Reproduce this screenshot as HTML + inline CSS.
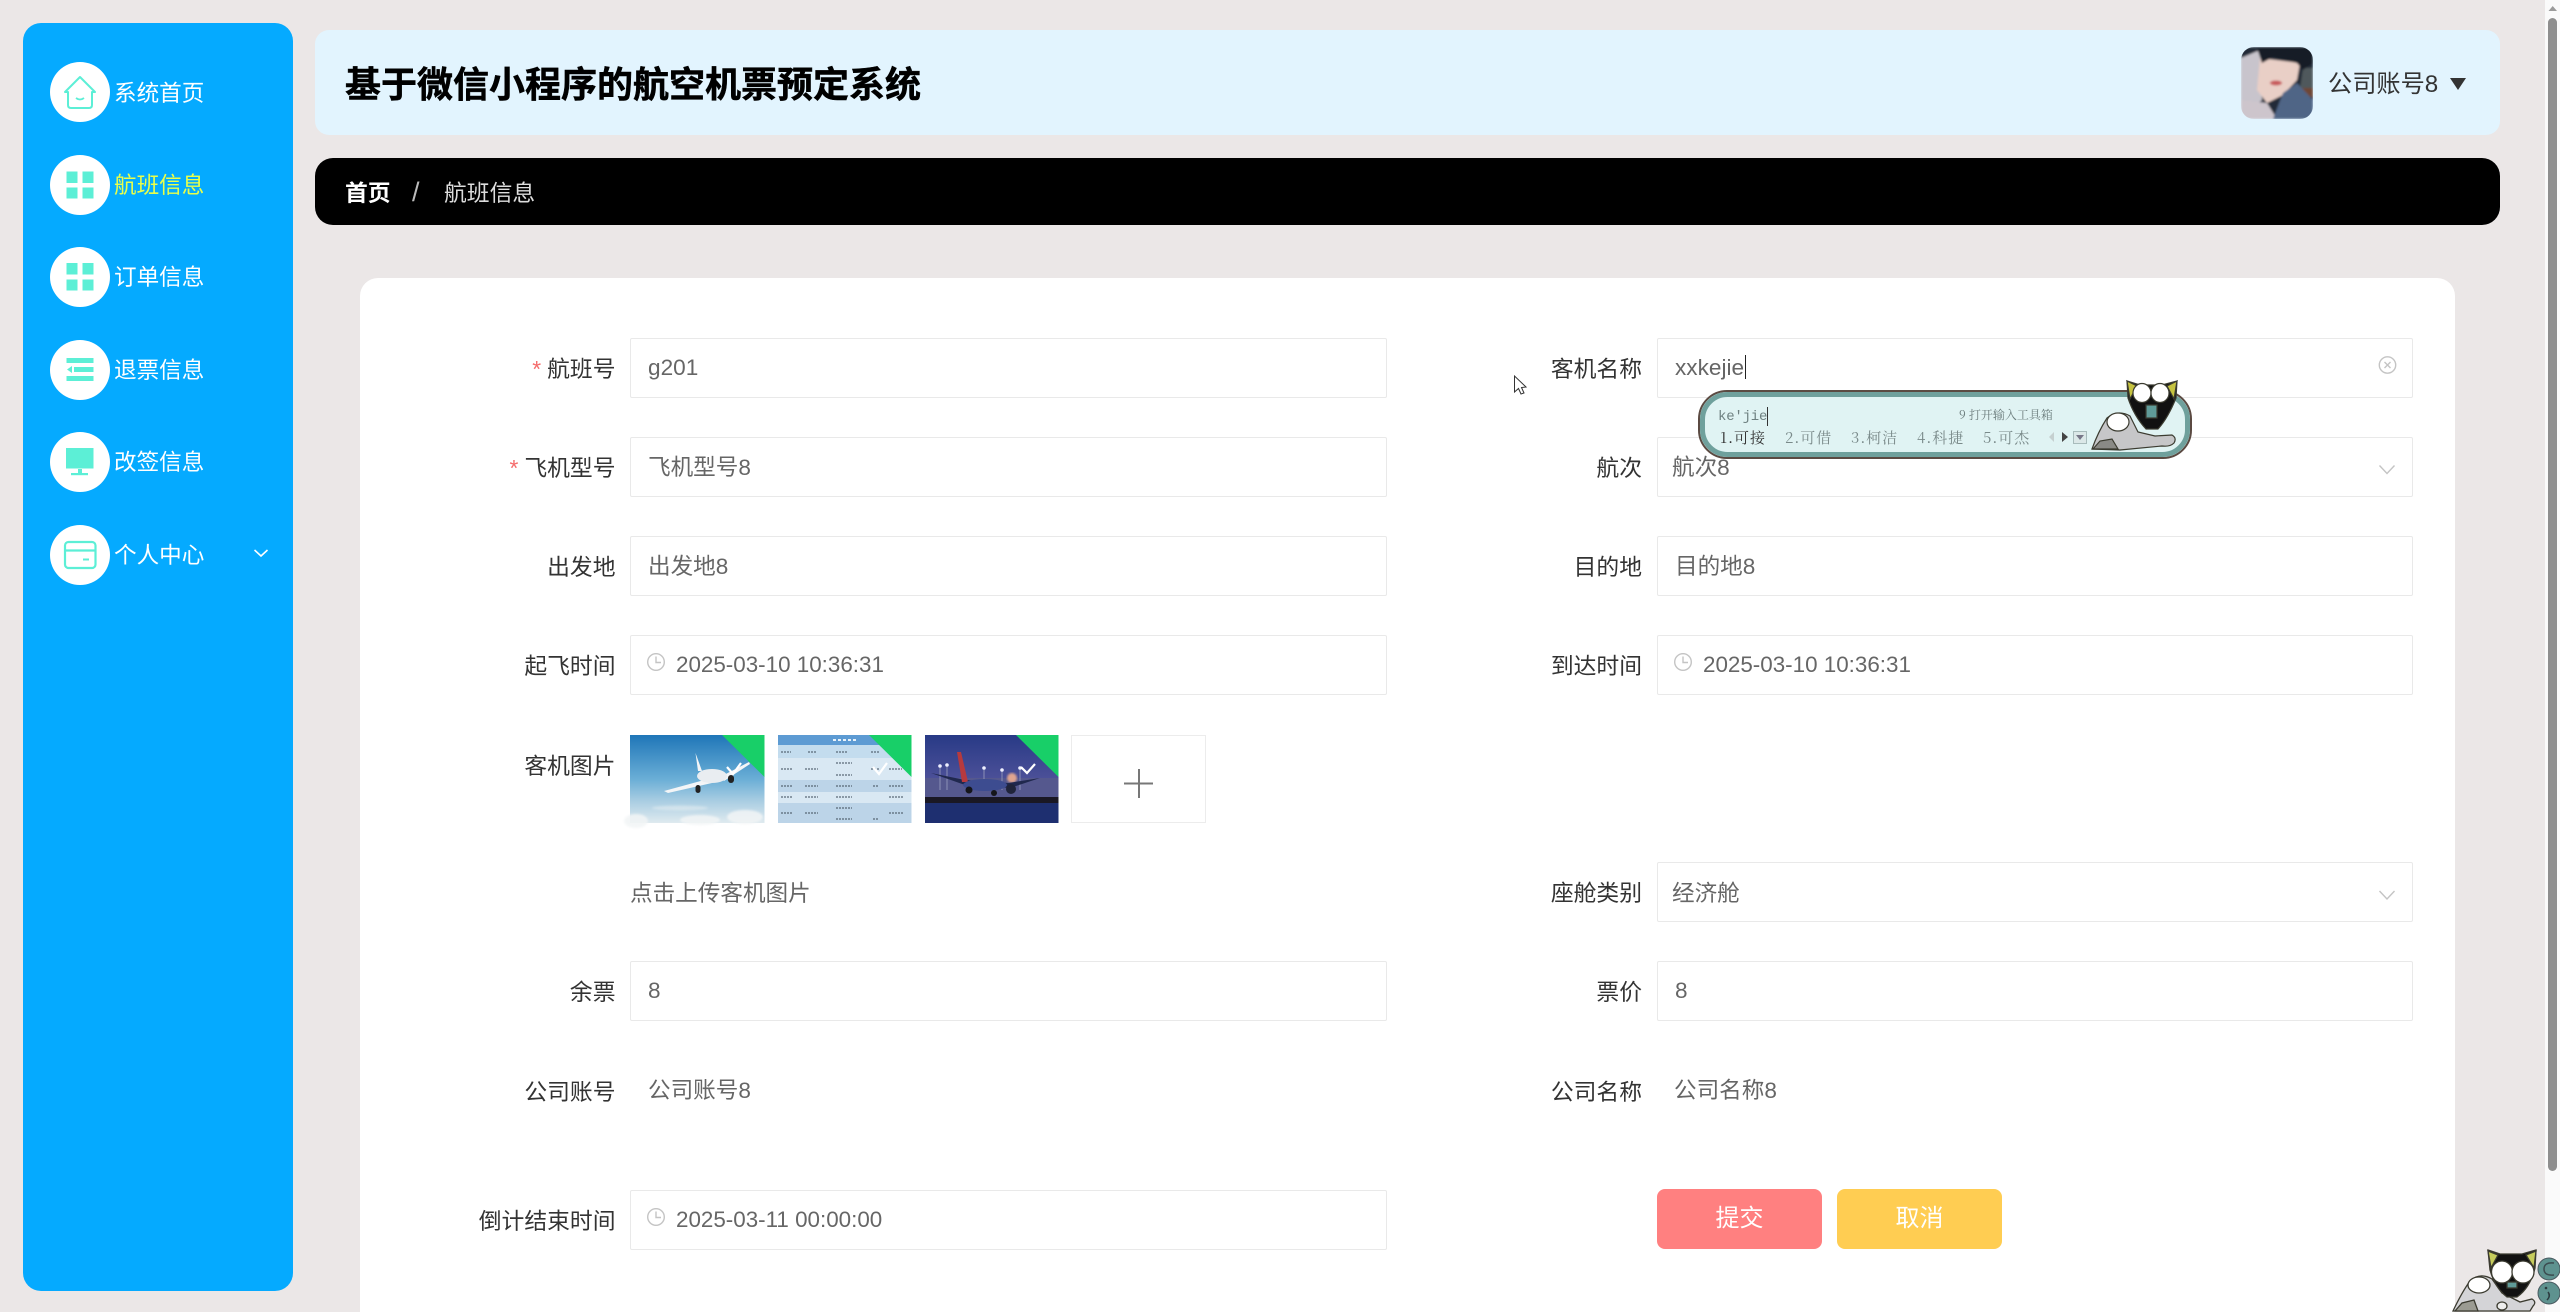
<!DOCTYPE html>
<html lang="zh"><head><meta charset="utf-8"><title>航班信息</title>
<style>
html,body{margin:0;padding:0;width:2560px;height:1312px;overflow:hidden;background:#ebe7e7}
body{font-family:"Liberation Sans","Noto Sans CJK SC",sans-serif;position:relative;color:#666}
.a{position:absolute;white-space:nowrap}
.nav{left:114px;width:100px;height:40px;line-height:40px;font-size:22.6px;color:#fff}
.lab{height:40px;line-height:40px;font-size:22.8px;color:#333;text-align:right;width:300px}
.lab.l{left:315.500px}.lab.r{left:1342px}
.lab i{font-style:normal;color:#f56c6c;margin-right:6px}
.in{height:58px;border:1px solid #e9e9e9;border-radius:2px;background:#fff;box-sizing:content-box}
.in.l{left:630px;width:755px}.in.r{left:1657px;width:754px}
.v{height:40px;line-height:40px;font-size:22.6px;color:#666}
.btn{top:1189px;height:60px;width:165px;line-height:60px;text-align:center;color:#fff;font-size:24px;border-radius:8px}
.ime{font-family:"Noto Serif CJK SC","Liberation Mono",serif;font-size:15px;line-height:20px;color:#7a8a8a;letter-spacing:1px}
</style></head><body>

<div class="a" style="left:23px;top:23px;width:270px;height:1268px;background:#05aaff;border-radius:18px"></div>
<div class="a" style="left:315px;top:30px;width:2185px;height:105px;background:#e2f4fe;border-radius:14px"></div>
<div class="a" style="left:315px;top:158px;width:2185px;height:67px;background:#000;border-radius:18px"></div>
<div class="a" style="left:360px;top:278px;width:2095px;height:1034px;background:#fff;border-radius:18px 18px 0 0"></div>

<div class="a" style="left:2545px;top:0;width:15px;height:1312px;background:#fafafa"></div>
<div class="a" style="left:2548px;top:18px;width:9px;height:1153px;background:#8e8e8e;border-radius:5px"></div>

<div class="a" style="left:345px;top:61px;height:48px;line-height:48px;font-size:36px;font-weight:700;color:#000;-webkit-text-stroke:.5px #000">基于微信小程序的航空机票预定系统</div>
<div class="a" style="left:2328px;top:65px;height:40px;line-height:40px;font-size:24.200px;color:#333">公司账号8</div>
<div class="a" style="left:345px;top:173px;height:40px;line-height:40px;font-size:22.800px;font-weight:700;color:#fff">首页</div>
<div class="a" style="left:412px;top:172px;height:40px;line-height:40px;font-size:27px;color:#bbb">/</div>
<div class="a" style="left:444px;top:173px;height:40px;line-height:40px;font-size:22.800px;color:#ddd">航班信息</div>

<div class="a nav" style="top:74px">系统首页</div>
<div class="a nav" style="top:166px;color:#e9ff4a">航班信息</div>
<div class="a nav" style="top:258px">订单信息</div>
<div class="a nav" style="top:351px">退票信息</div>
<div class="a nav" style="top:443px">改签信息</div>
<div class="a nav" style="top:536px">个人中心</div>

<!-- inputs -->
<div class="a in l" style="top:338px"></div><div class="a in r" style="top:338px"></div>
<div class="a in l" style="top:437px"></div><div class="a in r" style="top:437px"></div>
<div class="a in l" style="top:536px"></div><div class="a in r" style="top:536px"></div>
<div class="a in l" style="top:635px"></div><div class="a in r" style="top:635px"></div>
<div class="a in r" style="top:862px"></div>
<div class="a in l" style="top:961px"></div><div class="a in r" style="top:961px"></div>
<div class="a in l" style="top:1190px"></div>

<!-- labels -->
<div class="a lab l" style="top:349px"><i>*</i>航班号</div>
<div class="a lab l" style="top:448px"><i>*</i>飞机型号</div>
<div class="a lab l" style="top:547px">出发地</div>
<div class="a lab l" style="top:646px">起飞时间</div>
<div class="a lab l" style="top:746px">客机图片</div>
<div class="a lab l" style="top:972px">余票</div>
<div class="a lab l" style="top:1072px">公司账号</div>
<div class="a lab l" style="top:1201px">倒计结束时间</div>
<div class="a lab r" style="top:349px">客机名称</div>
<div class="a lab r" style="top:448px">航次</div>
<div class="a lab r" style="top:547px">目的地</div>
<div class="a lab r" style="top:646px">到达时间</div>
<div class="a lab r" style="top:873px">座舱类别</div>
<div class="a lab r" style="top:972px">票价</div>
<div class="a lab r" style="top:1072px">公司名称</div>

<!-- values -->
<div class="a v" style="left:648px;top:348px">g201</div>
<div class="a v" style="left:648px;top:448px">飞机型号8</div>
<div class="a v" style="left:648px;top:547px">出发地8</div>
<div class="a v" style="left:676px;top:645px;font-size:22.400px">2025-03-10 10:36:31</div>
<div class="a v" style="left:630px;top:874px">点击上传客机图片</div>
<div class="a v" style="left:648px;top:971px">8</div>
<div class="a v" style="left:648px;top:1071px">公司账号8</div>
<div class="a v" style="left:676px;top:1200px;font-size:22.400px">2025-03-11 00:00:00</div>
<div class="a v" style="left:1675px;top:348px">xxkejie</div>
<div class="a" style="left:1745px;top:355px;width:1px;height:24px;background:#222"></div>
<div class="a v" style="left:1672px;top:448px">航次8</div>
<div class="a v" style="left:1675px;top:547px">目的地8</div>
<div class="a v" style="left:1703px;top:645px;font-size:22.400px">2025-03-10 10:36:31</div>
<div class="a v" style="left:1672px;top:874px">经济舱</div>
<div class="a v" style="left:1675px;top:971px">8</div>
<div class="a v" style="left:1674px;top:1071px">公司名称8</div>

<div class="a btn" style="left:1657px;background:#ff8080">提交</div>
<div class="a btn" style="left:1837px;background:#ffcd52">取消</div>

<!-- graphics layer -->
<svg class="a" style="left:0;top:0" width="2560" height="1312" viewBox="0 0 2560 1312" xmlns="http://www.w3.org/2000/svg">
<defs>
<linearGradient id="s1" x1="0" y1="0" x2="0" y2="1"><stop offset="0" stop-color="#1f76b8"/><stop offset=".5" stop-color="#6aaed6"/><stop offset=".75" stop-color="#a9cde2"/><stop offset="1" stop-color="#dfeaef"/></linearGradient>
<linearGradient id="s3" x1="0" y1="0" x2="0" y2="1"><stop offset="0" stop-color="#283a86"/><stop offset="1" stop-color="#4c5098"/></linearGradient>
<clipPath id="av"><rect x="2241" y="47" width="72" height="72" rx="13"/></clipPath>
<filter id="bl"><feGaussianBlur stdDeviation="1"/></filter>
</defs>

<path d="M2548.500 11 L2552.700 6 L2557 11Z" fill="#9a9a9a"/>

<g fill="#fff">
<circle cx="80" cy="92" r="30"/><circle cx="80" cy="185" r="30"/><circle cx="80" cy="277" r="30"/>
<circle cx="80" cy="370" r="30"/><circle cx="80" cy="462" r="30"/><circle cx="80" cy="555" r="30"/>
</g>
<g fill="none" stroke="#5cefd6" stroke-width="2">
<path d="M65 92 L80 77 L95 92 L92 92 V105 Q92 108 89 108 H71 Q68 108 68 105 V92Z" stroke-linejoin="round"/>
<path d="M76 98 Q80 101 84 98" stroke-width="1.800"/>
</g>
<g fill="#5cefd6">
<rect x="66.500" y="171.500" width="11" height="11.500"/><rect x="82.500" y="171.500" width="11" height="11.500"/><rect x="66.500" y="187.500" width="11" height="11"/><rect x="82.500" y="187.500" width="11" height="11"/>
<rect x="66.500" y="263" width="11" height="11.500"/><rect x="82.500" y="263" width="11" height="11.500"/><rect x="66.500" y="279.500" width="11" height="11"/><rect x="82.500" y="279.500" width="11" height="11"/>
<rect x="66.500" y="358" width="27" height="5"/><rect x="74" y="367" width="19.500" height="5"/><path d="M67 369.500 L72 366 V373Z"/><rect x="66.500" y="376" width="27" height="5"/>
<rect x="66" y="448" width="27.500" height="20.500"/><rect x="78" y="469" width="4" height="4"/><rect x="71" y="473" width="17" height="2.200"/>
</g>
<g fill="none" stroke="#5cefd6" stroke-width="2.200">
<rect x="65" y="542" width="30.500" height="26" rx="3.500"/><path d="M65 550.500 H95.500"/>
<path d="M83 559.500 H89" stroke-width="2"/>
</g>
<path d="M254.500 550 L261 556 L267.500 550" fill="none" stroke="#fff" stroke-width="1.600"/>

<path d="M2450 78 H2466 L2458 90Z" fill="#333"/>

<!-- avatar -->
<g clip-path="url(#av)"><g filter="url(#bl)">
<rect x="2241" y="47" width="72" height="72" fill="#222c38"/>
<path d="M2303 68 H2313 V88 H2300Z" fill="#50585c"/>
<rect x="2299" y="88" width="14" height="9" fill="#6e4636"/>
<path d="M2241 58 L2260 50 L2262 100 L2241 119Z" fill="#c8c4cc"/>
<path d="M2260 58 L2300 63 L2297 80 L2283 95 L2267 103 L2257 90Z" fill="#e9cfc6"/>
<path d="M2257 48 L2313 47 V63 L2303 70 L2297 63 L2273 57 L2262 63Z" fill="#141c26"/>
<path d="M2241 100 L2267 103 L2277 119 H2241Z" fill="#cdc5cc"/>
<path d="M2273 119 L2283 93 L2297 83 L2313 100 V119Z" fill="#4f6586"/>
<ellipse cx="2276" cy="83" rx="6" ry="2.500" fill="#c85a5c"/>
</g></g>

<g fill="none" stroke="#c4c4c4" stroke-width="1.400">
<circle cx="2387.500" cy="365" r="8.200"/><path d="M2384.500 362 L2390.500 368 M2390.500 362 L2384.500 368"/>
<path d="M2379.500 465.500 L2387 473.500 L2394.500 465.500"/>
<path d="M2379.500 891 L2387 899 L2394.500 891"/>
<circle cx="656" cy="662" r="8.300"/><path d="M656 656.500 V662.500 H661"/>
<circle cx="1683" cy="662" r="8.300"/><path d="M1683 656.500 V662.500 H1688"/>
<circle cx="656" cy="1217" r="8.300"/><path d="M656 1211.500 V1217.500 H661"/>
</g>

<!-- thumb 1 -->
<rect x="630" y="735" width="134.500" height="88" fill="url(#s1)"/>
<g filter="url(#bl)" fill="#f2f5f6" opacity=".85"><ellipse cx="636" cy="821" rx="12" ry="7"/><ellipse cx="700" cy="820" rx="20" ry="5"/><ellipse cx="745" cy="817" rx="18" ry="7"/><ellipse cx="680" cy="808" rx="28" ry="2.500" opacity=".5"/></g>
<path d="M664 791 L708 779 L712 783 L668 793Z" fill="#f3f5f7"/>
<path d="M720 777 L749 762 L750 764 L724 781Z" fill="#f3f5f7"/>
<path d="M695.500 753 L698 771 L702 771Z" fill="#f3f5f7"/>
<ellipse cx="712" cy="776" rx="15" ry="7" fill="#e9edf1"/>
<rect x="695.500" y="785" width="5" height="8" rx="2.500" fill="#222"/><rect x="728" y="775" width="6" height="8" rx="3" fill="#222"/>
<path d="M722 735 H764.500 V777Z" fill="#18cf68"/>
<path d="M727 767 L733 774 L741 763" fill="none" stroke="#fff" stroke-width="2.200"/>

<!-- thumb 2 -->
<rect x="778" y="735" width="133.500" height="88" fill="#d9e8f3"/>
<rect x="778" y="735" width="133.500" height="10" fill="#5d9bd3"/>
<rect x="778" y="745" width="133.500" height="13" fill="#c3dcee"/>
<rect x="778" y="780" width="133.500" height="12" fill="#bcd4e8"/>
<rect x="778" y="803" width="133.500" height="20" fill="#bcd4e8"/>
<path d="M833 740 H858" stroke="#e8f2fa" stroke-width="2" stroke-dasharray="3 2"/>
<g stroke="#4d5c6a" stroke-width="1.500" stroke-dasharray="2 1" opacity=".75">
<path d="M781 752 H791 M808 752 H816 M836 752 H848 M871 752 H880 M781 769 H792 M805 769 H818 M836 763 H852 M836 775 H852 M871 769 H880 M889 769 H902 M781 786 H792 M805 786 H818 M836 786 H852 M873 786 H879 M889 786 H904 M781 797 H792 M805 797 H818 M836 797 H852 M889 797 H904 M781 813 H792 M805 813 H818 M836 808 H852 M836 819 H852 M873 819 H879 M889 813 H904"/>
</g>
<path d="M869 735 H911.500 V777Z" fill="#18cf68"/>
<path d="M873 767 L879 774 L887 763" fill="none" stroke="#fff" stroke-width="2.200"/>

<!-- thumb 3 -->
<rect x="925" y="735" width="133.500" height="44" fill="url(#s3)"/>
<rect x="925" y="778" width="133.500" height="19" fill="#55588e"/>
<rect x="925" y="797" width="133.500" height="6" fill="#1a1824"/>
<rect x="925" y="803" width="133.500" height="20" fill="#1e2f70"/>
<g stroke="#8a8fb5" stroke-width="1"><path d="M940 766 V790 M947 765 V790 M984 768 V790 M1002 770 V790 M1020 768 V790"/></g>
<g fill="#eef0ff"><circle cx="940" cy="766" r="1.800"/><circle cx="947" cy="765" r="1.800"/><circle cx="984" cy="768" r="1.800"/><circle cx="1002" cy="770" r="1.800"/><circle cx="1020" cy="768" r="1.800"/></g>
<circle cx="1012" cy="778" r="5" fill="#e0a58f" filter="url(#bl)"/>
<path d="M931 773 L965 780 L1008 783 L1040 778 L1010 788 L965 785Z" fill="#20284e"/>
<path d="M957 752 L962 782 L968 782 L961 752Z" fill="#b63a3e"/>
<ellipse cx="985" cy="785" rx="22" ry="6" fill="#3d4c90"/>
<circle cx="969" cy="790" r="3.500" fill="#15151a"/><circle cx="994" cy="793" r="3" fill="#15151a"/><circle cx="1011" cy="789" r="5" fill="#20243a"/>
<path d="M1016 735 H1058.500 V777Z" fill="#18cf68"/>
<path d="M1021 767 L1027 773 L1035 764" fill="none" stroke="#fff" stroke-width="2.200"/>

<!-- upload box -->
<rect x="1071.500" y="735.500" width="134" height="87" fill="#fff" stroke="#ececec"/>
<path d="M1139 769 V798 M1124 783.500 H1153" stroke="#777" stroke-width="2"/>

<!-- cursor -->
<path d="M1514.500 376 V392 L1518.500 388.500 L1521 394 L1524 393 L1521.500 387.500 L1526 387Z" fill="#fff" stroke="#333" stroke-width="1"/>

<!-- IME bar -->
<rect x="1699" y="391" width="492" height="67" rx="28" fill="#e0f3f3" stroke="#5b4a42" stroke-width="2"/>
<rect x="1702.500" y="394.500" width="485" height="60" rx="25" fill="none" stroke="#6fa09c" stroke-width="5"/>
<path d="M2054 432 L2049 437 L2054 442Z" fill="#c5d0d0"/>
<path d="M2062 432 L2062 442 L2068 437Z" fill="#444"/>
<rect x="2073.500" y="431.500" width="13" height="12" fill="#dbe8e8" stroke="#a8bcbc"/>
<path d="M2076 435 H2084 L2080 440Z" fill="#778"/>

<!-- IME mascot -->
<g stroke="#3b3b30" stroke-width="1.200">
<path d="M2092 449 Q2098 432 2107 418 Q2118 409 2130 416 L2138 432 L2155 436 L2172 435 Q2177 438 2174 443 Q2170 447 2162 446 L2120 450Z" fill="#c6c6c8"/>
<ellipse cx="2118" cy="422" rx="11" ry="9" fill="#fff"/>
<path d="M2093 449 L2100 441 L2112 439 L2118 449Z" fill="#8a8a86"/>
<path d="M2127 381 L2140 385 H2162 L2177 381 L2176 398 Q2168 418 2158 429 H2146 Q2134 416 2128 398Z" fill="#111"/>
<path d="M2127 381 L2137 386 L2130 399Z" fill="#c6c340"/>
<path d="M2177 381 L2167 386 L2174 399Z" fill="#c6c340"/>
<ellipse cx="2142" cy="393" rx="9" ry="9.500" fill="#fff"/>
<ellipse cx="2160" cy="393" rx="9" ry="9.500" fill="#fff"/>
<rect x="2146" y="405" width="11" height="13" fill="#5f9b98"/>
</g>

<!-- bottom right mascot -->
<g stroke="#3b3b30" stroke-width="1.300">
<path d="M2453 1311 Q2462 1292 2470 1281 Q2480 1272 2492 1279 L2502 1293 L2520 1302 L2532 1299 Q2537 1302 2533 1306 L2530 1311Z" fill="#d4d4d7"/>
<ellipse cx="2479" cy="1285" rx="11" ry="8" fill="#fff"/>
<path d="M2455 1311 L2462 1303 L2474 1300 L2478 1311Z" fill="#9b9b92"/>
<path d="M2488 1250 L2500 1254 H2522 L2536 1250 L2535 1268 Q2530 1288 2517 1297 H2507 Q2495 1288 2490 1270Z" fill="#111"/>
<path d="M2488 1251 L2498 1255 L2491 1268Z" fill="#c6cc5c"/>
<path d="M2536 1251 L2526 1255 L2534 1268Z" fill="#c6cc5c"/>
<ellipse cx="2502" cy="1272" rx="10.500" ry="11" fill="#fff"/>
<ellipse cx="2523" cy="1272" rx="11" ry="11" fill="#fff"/>
<rect x="2507" y="1282" width="10" height="6" fill="#5f9b98"/>
<ellipse cx="2502" cy="1306" rx="5" ry="4" fill="#eee"/>
</g>
<circle cx="2549" cy="1269" r="11" fill="#5e928f" stroke="#4a5a60" stroke-width="1"/>
<path d="M2554 1263 Q2544 1262 2544 1269 Q2544 1276 2554 1275" fill="none" stroke="#3c4c50" stroke-width="1.500"/>
<circle cx="2549" cy="1293" r="11" fill="#5e928f" stroke="#4a5a60" stroke-width="1"/>
<path d="M2548 1292 q3 4 -1 8" fill="none" stroke="#2c3c40" stroke-width="1.500"/><circle cx="2546" cy="1288" r="1.300" fill="#2c3c40"/>
</svg>

<!-- IME text -->
<div class="a ime" style="left:1718px;top:407px;color:#6e8080;letter-spacing:-.2px;font-family:'Liberation Mono',monospace;font-size:14px">ke'jie</div>
<div class="a" style="left:1767px;top:407px;width:1px;height:19px;background:#333"></div>
<div class="a ime" style="left:1959px;top:405px;color:#6b7c7c;font-size:12px;letter-spacing:0">9 打开输入工具箱</div>
<div class="a ime" style="left:1720px;top:428px;color:#333">1.可接</div>
<div class="a ime" style="left:1785px;top:428px">2.可借</div>
<div class="a ime" style="left:1851px;top:428px">3.柯洁</div>
<div class="a ime" style="left:1917px;top:428px">4.科捷</div>
<div class="a ime" style="left:1983px;top:428px">5.可杰</div>

</body></html>
